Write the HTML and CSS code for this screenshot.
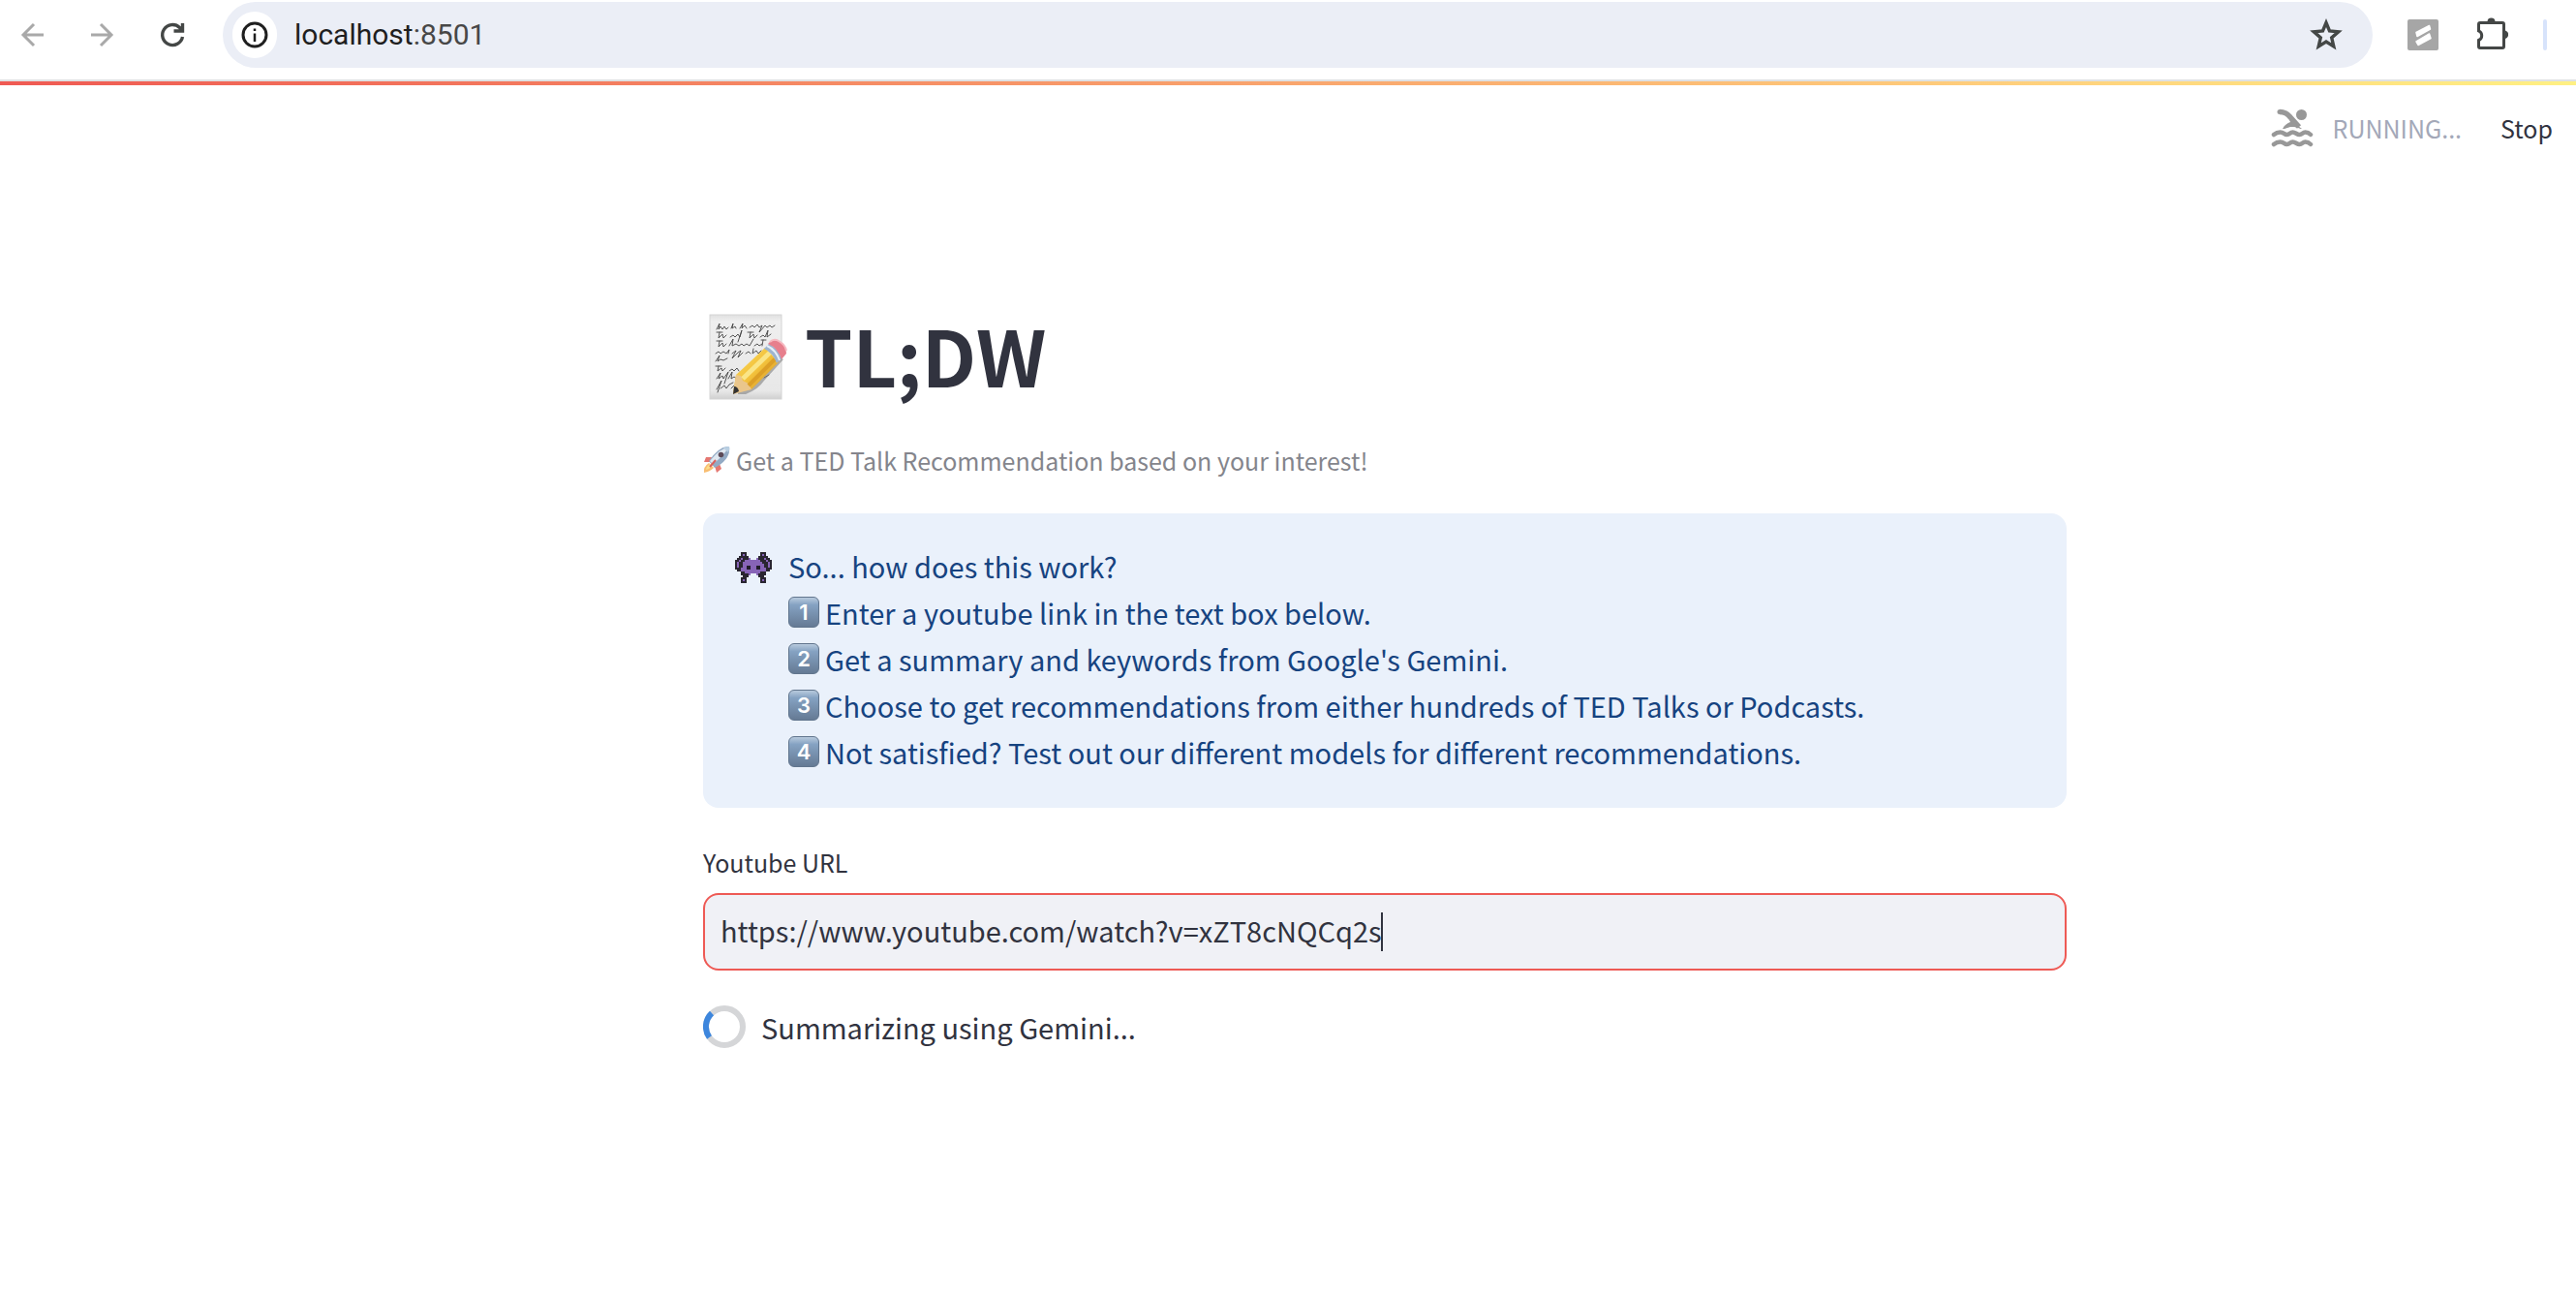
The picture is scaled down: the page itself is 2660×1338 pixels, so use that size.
FILE: index.html
```html
<!DOCTYPE html>
<html lang="en">
<head>
<meta charset="utf-8">
<title>TL;DW</title>
<link rel="stylesheet" href="styles.css">
</head>
<body>
<header class="browser-bar">
  <button class="nav-button" aria-label="Back">
    <svg class="icon" viewBox="0 0 32 32" fill="none" stroke="#a9a9a9" stroke-width="3"><path d="M27 16H6M17 5L6 16l11 11"/></svg>
  </button>
  <button class="nav-button" aria-label="Forward">
    <svg class="icon" viewBox="0 0 32 32" fill="none" stroke="#a9a9a9" stroke-width="3"><path d="M4 16h21M14 5l11 11-11 11"/></svg>
  </button>
  <button class="nav-button" aria-label="Reload">
    <svg class="icon" viewBox="0 0 32 32" fill="none" stroke="#444746" stroke-width="3.400"><path d="M26.500 18A10.500 10.500 0 1 1 23.500 8.500L26 11M26.500 4v8h-9"/></svg>
  </button>
  <div class="address">
    <button class="site-info" aria-label="View site information">
      <svg class="icon" viewBox="0 0 32 32" fill="none" stroke="#1f1f1f"><circle cx="16" cy="16" r="12" stroke-width="3"/><path d="M16 14.500v8.500" stroke-width="2.500"/><path d="M16 9.500v2.500" stroke-width="2.500"/></svg>
    </button>
    <a class="location" href="#">localhost<span class="port">:8501</span></a>
    <button class="bookmark" aria-label="Bookmark this tab">
      <svg class="star" viewBox="0 0 36 36" fill="none" stroke="#444746" stroke-width="3.400"><path d="M18 5.500l3.500 8.500 9.200.8-7 6.100 2.100 9L18 25.100l-7.800 4.800 2.100-9-7-6.100 9.200-.8z"/></svg>
    </button>
  </div>
  <div class="extensions">
    <button class="nav-button" aria-label="Extension">
      <svg class="icon" viewBox="0 0 32 32"><rect width="32" height="32" rx="2" fill="#a6a6a6"/><path d="M9 13.500L22.500 6.500L23.500 10L10 17.500zM9 23L22.500 15L24 19.500L11 26.500z" fill="#fff" stroke="#fff" stroke-width="1.500" stroke-linejoin="round"/></svg>
    </button>
    <button class="nav-button" aria-label="Extensions">
      <svg class="puzzle" viewBox="0 0 36 36"><path d="M7 5.500h23q1.500 0 1.500 1.500v23q0 1.500-1.500 1.500H7q-1.500 0-1.500-1.500v-6.500a5.200 5.200 0 0 0 0-9.600V7q0-1.500 1.500-1.500z" fill="none" stroke="#444746" stroke-width="3"/><path d="M14.500 4.500a4 4 0 0 1 8 0zM32 13.500a4.200 4.200 0 0 1 0 8.400z" fill="#444746"/></svg>
    </button>
    <span class="divider"></span>
  </div>
</header>
<div class="decoration"></div>
<div class="toolbar">
  <svg class="swimmer" viewBox="0 0 44 42" fill="none" stroke="#989898" stroke-width="5" stroke-linecap="round"><circle cx="31.500" cy="7.500" r="5.500" fill="#989898" stroke="none"/><path d="M9 4.500c5 0 8 1.500 11 5.500l9 10" stroke-width="5.500" stroke-linecap="butt"/><path d="M9 4.500h.1" stroke-width="5"/><path d="M18 10l6 6 8 6c-3 0-5-2-10-2s-5 2-10 2c2-4 5-6 8-7z" fill="#989898" stroke="none"/><path d="M3 28q3-2.500 6.500-2.500c4 0 4 2.500 7 2.500s3-2.500 6-2.500 4 2.500 7 2.500 3-2.500 6-2.500q3 0 5.500 2.500M3 38q3-2.500 6.500-2.500c4 0 4 2.500 7 2.500s3-2.500 6-2.500 4 2.500 7 2.500 3-2.500 6-2.500q3 0 5.500 2.500" stroke-width="4.500"/></svg>
  <span class="status">RUNNING...</span>
  <button class="stop">Stop</button>
</div>
<div class="page">
<main class="content">
  <h1 class="title">
    <svg class="memo" viewBox="0 -6 86 98" aria-hidden="true">
      <defs>
        <linearGradient id="paper" x1="0" y1="0" x2="0" y2="1"><stop offset="0" stop-color="#e0e0e0"/><stop offset=".08" stop-color="#efefef"/><stop offset=".9" stop-color="#e8e8e8"/><stop offset="1" stop-color="#d0d0d0"/></linearGradient>
        <linearGradient id="wood" x1="0" y1="0" x2="1" y2="1"><stop offset="0" stop-color="#f9d95e"/><stop offset=".5" stop-color="#f3c23c"/><stop offset="1" stop-color="#c9861e"/></linearGradient>
      </defs>
      <rect x="1" y="2" width="74" height="87" fill="url(#paper)" stroke="#d5d5d5"/>
      <g fill="none" stroke="#444" stroke-width=".9" stroke-linecap="round">
        <path d="M8 17l3-6-1 6 2-3 2 3 2-3 2 3 2-2M23 16l2-5-1 5 3-2 1 2M32 16l3-5-1 5 3-3 2 3M42 15l3-2 2 2 3-3 2 3 3-2-3 7 6-7 2 2 3-2 2 2 3-2"/>
        <path d="M8 20h6m-3 0l-1 6 4-4 1 4 3-3M22 25l3-2 2 2 3-3 2 3 2-7-4 12M40 20h6m-3 0l-1 6 4-4 1 4 3-3M53 25l3-2 2 2 3-7-1 7 4-3"/>
        <path d="M8 29h6m-3 0l-1 6 4-4 1 4 3-3M21 34l4-7-1 7 4-2 3 2 3-2 2 2 3-2 3 2 4-7M47 34l3-2 2 2 3-2M54 28h5m-3 0l-1 6"/>
        <path d="M7 42l3-2 2 2 3-2 3 2 3-4-1 4M24 42l4-3-4 8 6-6 3-2-3 7 5-5M38 42l3-2 2 2M46 37l-1 5 4-3 2 3 3-3"/>
        <path d="M7 50l4-6-2 6 3-2 3 1 4-2"/>
        <path d="M7 55h6m-3 0l-1 5 4-3 1 3 3-3M21 60l3-2 2 2 3-3 2 3"/>
        <path d="M8 68l4-6-2 6 4-3 1 3 5-7-4 12M20 68l4-7-1 7 3-2 3 2 3-2M57 67l5-3M8 79l5-9-4 12M12 78l4-3 2 3 3-4 4-2M23 78l3-3"/>
      </g>
      <path d="M30 84L38 84Q51 79 57 70L77 48L71 45L30 81z" fill="#777" opacity=".55"/>
      <path d="M25 83l3-19L58 36l14 15-28 28z" fill="url(#wood)"/>
      <path d="M28 64l5 1 2 5 6 3 3 6-19 5z" fill="#eac68b"/>
      <path d="M25 84l1-8q4 0 5 5z" fill="#333"/>
      <path d="M35 68l28-27" stroke="#fae587" stroke-width="5"/><path d="M41 75l27-27" stroke="#dc9f26" stroke-width="4"/>
      <path d="M57 37l5-5q9 4 13 15l-5 5q-4-11-13-15z" fill="#9db4cf"/><path d="M60 34q9 4 13 15" fill="none" stroke="#e7eff8" stroke-width="2"/>
      <path d="M61 32l4-4q14 0 15 14l-5 6q-4-12-14-16z" fill="#e77f8d"/><path d="M63 30q4-4 9-1 7 4 8 10" fill="none" stroke="#f6b9c1" stroke-width="2"/>
    </svg>
    <span class="title-text">TL;DW</span>
  </h1>
  <p class="caption">
    <svg class="rocket" viewBox="0 0 28 28" aria-hidden="true"><path d="M9 11l-6 0-2 5 7 0zM17 18l2 5-5 4-2-7z" fill="#e57771"/><path d="M6 17Q0 21 1 27Q7 26 11 22z" fill="#f8be72"/><path d="M7 18q-4 3-4 6 4-1 6-4z" fill="#fbe08a"/><path d="M27 0Q17-1 6 15l6 7Q29 13 27 0z" fill="#93aac4"/><path d="M26 1Q17 2 7 15l3 3Q22 9 26 1z" fill="#dfe8f1"/><path d="M27 0q-3 0-6 1 2 3 5 5Q28 3 27 0z" fill="#b9cfe2"/><circle cx="18.500" cy="8.500" r="2.800" fill="#5c4a58"/><path d="M13 14l-6 7" stroke="#d9605c" stroke-width="2"/></svg>
    <span>Get a TED Talk Recommendation based on your interest!</span>
  </p>
  <section class="info">
    <svg class="alien" viewBox="0 0 19 16" shape-rendering="crispEdges" aria-hidden="true"><path d="M3 0h3v2h1v1h1v1h3V3h1V2h1V0h3v2h1v1h1v1h1v5h-1v1h-2v2h-1v1h1v3h-3v-3h-1v-1h-1v-1H8v1H7v1H6v3H3v-3h1v-1H3v-2H1V9H0V4h1V3h1V2h1z" fill="#292530"/><path d="M4 1h1v1H4zM14 1h1v1h-1zM7 3h1v1h3V3h1v1h1v1h1v5h-1v1h-1v1h-1v-1H8v1H7v-1H5v-1H4V5h1V4h2zM3 3h1v1H3zM15 3h1v1h-1zM1 5h1v3H1zM17 5h1v3h-1zM2 4h1v1H2zM16 4h1v1h-1zM3 8h1v2H3zM15 8h1v2h-1zM14 6h1v4h-1zM4 14h1v1H4zM14 14h1v1h-1z" fill="#8764b7"/><path d="M6 7h2v2H6zM11 7h2v2h-2z" fill="#211c2a"/></svg>
    <div class="info-text">
      <p class="line">So... how does this work?</p>
      <ol class="steps">
        <li class="line"><span class="keycap">1</span>Enter a youtube link in the text box below.</li>
        <li class="line"><span class="keycap">2</span>Get a summary and keywords from Google's Gemini.</li>
        <li class="line"><span class="keycap">3</span>Choose to get recommendations from either hundreds of TED Talks or Podcasts.</li>
        <li class="line"><span class="keycap">4</span>Not satisfied? Test out our different models for different recommendations.</li>
      </ol>
    </div>
  </section>
  <div class="field">
    <label class="field-label" for="url">Youtube URL</label>
    <div class="field-box">
      <input class="field-input" id="url" type="text" value="https://www.youtube.com/watch?v=xZT8cNQCq2s">
      <span class="caret"></span>
    </div>
  </div>
  <div class="progress" role="status">
    <svg class="spinner" viewBox="0 0 44 44" fill="none" stroke-width="6"><circle cx="22" cy="22" r="19" stroke="#d5d6d8"/><path d="M9 8A19 19 0 0 0 6.500 33" stroke="#3d86dd"/></svg>
    <span>Summarizing using Gemini...</span>
  </div>
</main>
</div>
</body>
</html>
```
FILE: styles.css
```css
* {
  box-sizing: border-box;
}

body {
  margin: 0;
  background: #fff;
  color: #31333f;
  font-family: "Noto Sans CJK SC", "Noto Sans", sans-serif;
  font-size: 29px;
  line-height: 48px;
}

button {
  padding: 0;
  border: 0;
  background: none;
  color: inherit;
  font: inherit;
}

svg {
  display: block;
  flex: none;
}

h1,
p,
ol {
  margin: 0;
  padding: 0;
}

.browser-bar {
  display: flex;
  align-items: center;
  gap: 40px;
  height: 84px;
  padding: 0 30px 10px 18px;
  border-bottom: 2px solid #dfe1e3;
}

.icon {
  width: 32px;
  height: 32px;
}

.address {
  display: flex;
  flex: 1;
  align-items: center;
  height: 68px;
  margin: 0 -4px;
  padding: 0 30px 0 10px;
  border-radius: 34px;
  background: #ebeef6;
}

.site-info {
  display: grid;
  place-items: center;
  width: 46px;
  height: 48px;
  border-radius: 24px;
  background: #fff;
}

.location {
  flex: 1;
  margin-left: 18px;
  color: #1f1f1f;
  font-family: Roboto, sans-serif;
  font-size: 30px;
  text-decoration: none;
}

.port {
  color: #474747;
}

.star,
.puzzle {
  width: 36px;
  height: 36px;
}

.extensions {
  display: flex;
  align-items: center;
  gap: 36px;
}

.divider {
  width: 4px;
  height: 32px;
  border-radius: 2px;
  background: #d7e3fb;
}

.decoration {
  height: 4px;
  background: linear-gradient(90deg, #ef5a53, #ffd27d 80%, #fff083);
}

.toolbar {
  display: flex;
  align-items: center;
  justify-content: flex-end;
  height: 88px;
  padding-right: 24px;
  font-size: 25px;
}

.swimmer {
  width: 44px;
  height: 42px;
}

.status {
  margin: 0 40px 0 20px;
  color: #a3a8b8;
}

.page {
  padding-left: 200px;
}

.content {
  max-width: 1408px;
  margin: 0 auto;
  padding-top: 137px;
}

.title {
  display: flex;
  align-items: center;
  gap: 13px;
  height: 106px;
  padding-left: 6px;
  font-size: 79px;
  font-weight: 700;
  line-height: 106px;
}

.memo {
  width: 86px;
  height: 98px;
}

.caption {
  display: flex;
  align-items: center;
  gap: 6px;
  margin-top: 34px;
  color: #84858c;
  font-size: 25px;
  line-height: 44px;
}

.rocket {
  width: 28px;
  height: 28px;
}

.info {
  display: flex;
  gap: 17px;
  margin-top: 33px;
  padding: 30px 32px 34px 33px;
  border-radius: 16px;
  background: #eaf1fb;
  color: #164380;
}

.alien {
  width: 38px;
  height: 32px;
  margin-top: 10px;
}

.steps {
  list-style: none;
}

.line {
  display: flex;
  align-items: center;
}

.keycap {
  width: 32px;
  height: 32px;
  margin-right: 6px;
  border: 1px solid #61758d;
  border-radius: 6px;
  background: linear-gradient(#b8cadd, #85a2c2 25%, #657a94);
  color: #fff;
  font-family: Inter, sans-serif;
  font-size: 22px;
  font-weight: 600;
  line-height: 30px;
  text-align: center;
}

.field {
  margin-top: 32px;
}

.field-label {
  display: block;
  font-size: 25px;
}

.field-box {
  position: relative;
  margin-top: 8px;
}

.field-input {
  display: block;
  width: 100%;
  height: 80px;
  padding: 0 16px 4px;
  border: 2px solid #ee5a55;
  border-radius: 16px;
  outline: 0;
  background: #f0f1f6;
  color: inherit;
  font: inherit;
}

.caret {
  position: absolute;
  top: 20px;
  left: 700px;
  width: 2px;
  height: 40px;
  background: #31333f;
}

.progress {
  display: flex;
  align-items: center;
  gap: 16px;
  margin-top: 34px;
}

.spinner {
  width: 44px;
  height: 44px;
}
```
